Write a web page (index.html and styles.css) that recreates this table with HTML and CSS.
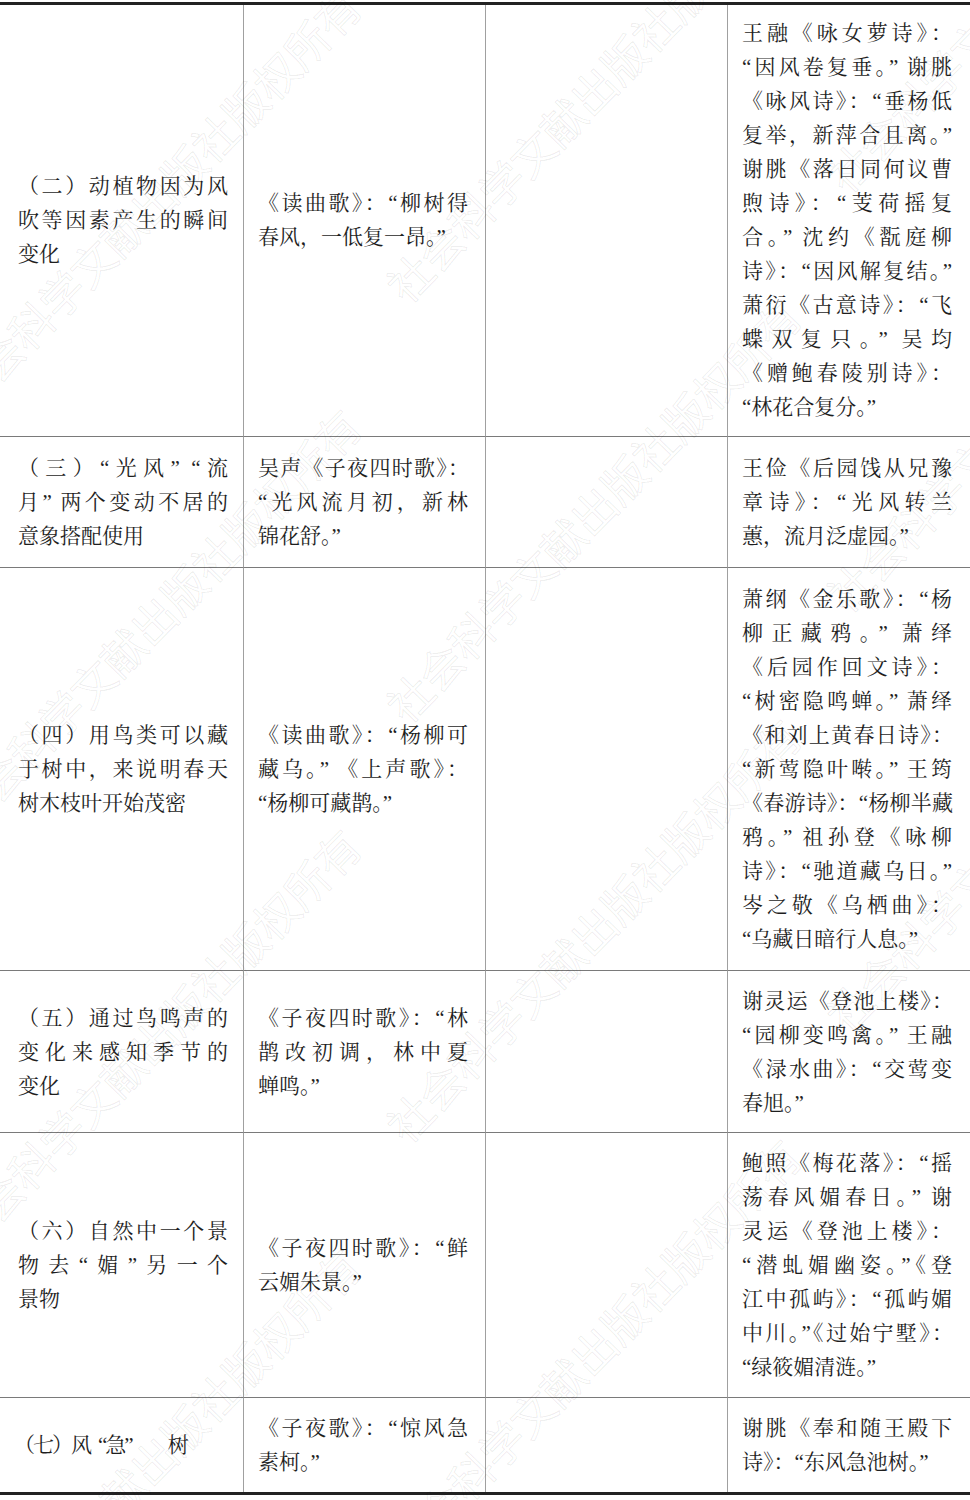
FILE: index.html
```html
<!DOCTYPE html>
<html lang="zh-CN">
<head>
<meta charset="utf-8">
<title>表</title>
<link rel="stylesheet" href="styles.css">
</head>
<body>
<div class="page">
<table class="tbl">
<tbody>
<tr class="r1">
<td class="c1"><span class="ln">（二）动植物因为风</span><span class="ln">吹等因素产生的瞬间</span><span class="ln last">变化</span></td>
<td class="c2"><span class="ln">《读曲歌》：“柳树得</span><span class="ln last">春风，一低复一昂。”</span></td>
<td class="c3"></td>
<td class="c4"><span class="ln">王融《咏女萝诗》：</span><span class="ln">“因风卷复垂。” 谢朓</span><span class="ln">《咏风诗》：“垂杨低</span><span class="ln">复举，新萍合且离。”</span><span class="ln">谢朓《落日同何议曹</span><span class="ln">煦诗》：“芰荷摇复</span><span class="ln">合。” 沈约《翫庭柳</span><span class="ln">诗》：“因风解复结。”</span><span class="ln">萧衍《古意诗》：“飞</span><span class="ln">蝶双复只。” 吴均</span><span class="ln">《赠鲍春陵别诗》：</span><span class="ln last">“林花合复分。”</span></td>
</tr>
<tr class="r2">
<td class="c1"><span class="ln">（三）“光风” “流</span><span class="ln">月” 两个变动不居的</span><span class="ln last">意象搭配使用</span></td>
<td class="c2"><span class="ln t">吴声《子夜四时歌》：</span><span class="ln">“光风流月初，新林</span><span class="ln last">锦花舒。”</span></td>
<td class="c3"></td>
<td class="c4"><span class="ln">王俭《后园饯从兄豫</span><span class="ln">章诗》：“光风转兰</span><span class="ln last">蕙，流月泛虚园。”</span></td>
</tr>
<tr class="r3">
<td class="c1"><span class="ln">（四）用鸟类可以藏</span><span class="ln">于树中，来说明春天</span><span class="ln last">树木枝叶开始茂密</span></td>
<td class="c2"><span class="ln">《读曲歌》：“杨柳可</span><span class="ln">藏乌。” 《上声歌》：</span><span class="ln last">“杨柳可藏鹊。”</span></td>
<td class="c3"></td>
<td class="c4"><span class="ln">萧纲《金乐歌》：“杨</span><span class="ln">柳正藏鸦。” 萧绎</span><span class="ln">《后园作回文诗》：</span><span class="ln">“树密隐鸣蝉。” 萧绎</span><span class="ln t">《和刘上黄春日诗》：</span><span class="ln">“新莺隐叶啭。” 王筠</span><span class="ln t">《春游诗》：“杨柳半藏</span><span class="ln">鸦。” 祖孙登《咏柳</span><span class="ln">诗》：“驰道藏乌日。”</span><span class="ln">岑之敬《乌栖曲》：</span><span class="ln last">“乌藏日暗行人息。”</span></td>
</tr>
<tr class="r4">
<td class="c1"><span class="ln">（五）通过鸟鸣声的</span><span class="ln">变化来感知季节的</span><span class="ln last">变化</span></td>
<td class="c2"><span class="ln">《子夜四时歌》：“林</span><span class="ln">鹊改初调，林中夏</span><span class="ln last">蝉鸣。”</span></td>
<td class="c3"></td>
<td class="c4"><span class="ln t">谢灵运《登池上楼》：</span><span class="ln">“园柳变鸣禽。” 王融</span><span class="ln">《渌水曲》：“交莺变</span><span class="ln last">春旭。”</span></td>
</tr>
<tr class="r5">
<td class="c1"><span class="ln">（六）自然中一个景</span><span class="ln">物去“媚”另一个</span><span class="ln last">景物</span></td>
<td class="c2"><span class="ln">《子夜四时歌》：“鲜</span><span class="ln last">云媚朱景。”</span></td>
<td class="c3"></td>
<td class="c4"><span class="ln">鲍照《梅花落》：“摇</span><span class="ln">荡春风媚春日。” 谢</span><span class="ln">灵运《登池上楼》：</span><span class="ln">“潜虬媚幽姿。”《登</span><span class="ln">江中孤屿》：“孤屿媚</span><span class="ln t">中川。”《过始宁墅》：</span><span class="ln last">“绿筱媚清涟。”</span></td>
</tr>
<tr class="r6">
<td class="c1"><span class="ln last sp">（七）风<span class="gap1"></span>“急”<span class="gap"></span>树</span></td>
<td class="c2"><span class="ln">《子夜歌》：“惊风急</span><span class="ln last">素柯。”</span></td>
<td class="c3"></td>
<td class="c4"><span class="ln">谢朓《奉和随王殿下</span><span class="ln last">诗》：“东风急池树。”</span></td>
</tr>
</tbody>
</table>
<div class="wm" aria-hidden="true">
<span class="wt w1">社会科学文献出版社版权所有</span>
<span class="wt w2">社会科学文献出版社版权所有</span>
<span class="wt w3">社会科学文献出版社版权所有</span>
<span class="wt w4">社会科学文献出版社版权所有</span>
<span class="wt w5">社会科学文献出版社版权所有</span>
<span class="wt w6">社会科学文献出版社版权所有</span>
<span class="wt w7">社会科学文献出版社版权所有</span>
<span class="wt w8">社会科学文献出版社版权所有</span>
<span class="wt w9">社会科学文献出版社版权所有</span>
<span class="wt w10">社会科学文献出版社版权所有</span>
<span class="wt w11">社会科学文献出版社版权所有</span>
</div>
</div>
</body>
</html>
```

FILE: styles.css
```css
html, body {
  margin: 0;
  padding: 0;
  background: #ffffff;
}

.page {
  position: relative;
  width: 970px;
  height: 1500px;
  overflow: hidden;
}

.tbl {
  width: 970px;
  margin-top: 2px;
  border-collapse: separate;
  border-spacing: 0;
  table-layout: fixed;
  border-top: 3px solid #222222;
  border-bottom: 3px solid #222222;
  font-family: "Liberation Serif", "Noto Serif CJK SC", "Noto Sans CJK SC", serif;
  font-size: 21px;
  line-height: 34px;
  color: #1e1e1e;
}

.tbl td {
  box-sizing: border-box;
  vertical-align: middle;
  padding: 14px 17px 14px 14px;
  border-bottom: 1px solid #7a7a7a;
}

.tbl td + td {
  border-left: 1px solid #a0a0a0;
}

.tbl .c1 {
  width: 243px;
  padding-left: 18px;
  padding-right: 15px;
}

.tbl .c2,
.tbl .c3 {
  width: 242px;
}

.tbl .c4 {
  width: 243px;
  padding-right: 18px;
}

.tbl .r1 td {
  padding-top: 11px;
  padding-bottom: 12px;
}

.tbl .r4 td {
  padding-top: 13px;
  padding-bottom: 12px;
}

.tbl .r5 td {
  padding-top: 13px;
  padding-bottom: 13px;
}

.tbl .r6 td {
  padding-top: 13px;
  padding-bottom: 13px;
  border-bottom: none;
}

.ln {
  display: block;
  white-space: nowrap;
  text-align: justify;
  text-align-last: justify;
}

.ln.last {
  text-align: left;
  text-align-last: left;
}

.ln.t {
  letter-spacing: -1px;
}

.ln.sp {
  letter-spacing: -2px;
  margin-left: -4px;
}

.gap1 {
  display: inline-block;
  width: 8px;
}

.gap {
  display: inline-block;
  width: 36px;
}

.wm {
  position: absolute;
  left: 0;
  top: 0;
  width: 970px;
  height: 1500px;
  pointer-events: none;
}

.wt {
  position: absolute;
  font-family: "Noto Sans CJK SC", sans-serif;
  font-size: 44px;
  line-height: 44px;
  letter-spacing: -0.3px;
  white-space: nowrap;
  color: transparent;
  -webkit-text-stroke: 1px rgba(0, 0, 0, 0.08);
  transform-origin: 22px 50%;
  transform: rotate(-45.6deg);
}

.w1 { left: -53px; top: 365px; }
.w2 { left: -53px; top: 785px; }
.w3 { left: -53px; top: 1205px; }
.w4 { left: -53px; top: 1625px; }
.w5 { left: 387px; top: 255px; }
.w6 { left: 387px; top: 675px; }
.w7 { left: 387px; top: 1095px; }
.w8 { left: 387px; top: 1515px; }
.w9 { left: 827px; top: 145px; }
.w10 { left: 827px; top: 565px; }
.w11 { left: 827px; top: 985px; }
```
